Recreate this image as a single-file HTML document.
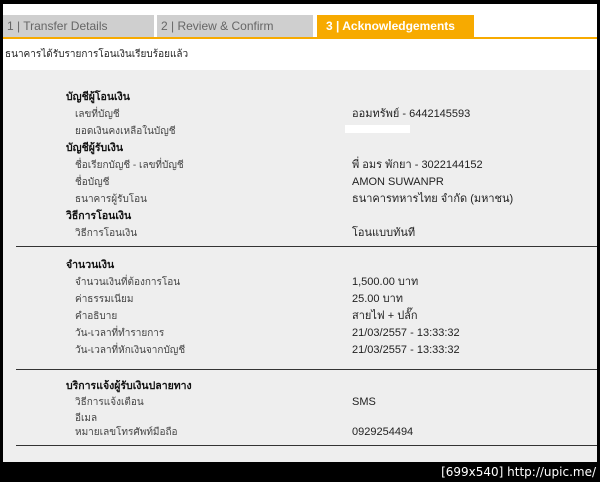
<!DOCTYPE html><html><head><meta charset="utf-8"><style>
*{margin:0;padding:0}
body{width:600px;height:482px;background:#000;position:relative;overflow:hidden;font-family:"Liberation Sans","Noto Sans CJK SC",sans-serif;font-size:11px;color:#222}
#w{position:absolute;left:3px;top:4px;width:594px;height:458px;background:#fff}
.tab{position:absolute;top:11px;height:22px;line-height:22px;font-size:12px;color:#666;background:#cfcfcf;padding-left:4px}
#p{position:absolute;left:0;top:66px;width:594px;height:392px;background:#eeeeee}
.a{position:absolute;white-space:nowrap;line-height:13px;height:13px}
.h{font-weight:bold;left:63px;color:#111;font-size:10.5px}
.l{left:72px;color:#444;font-size:10px}
.v{left:349px;color:#222}
.ln{position:absolute;left:13px;width:581px;height:1px;background:#333}
</style></head><body><div id="w">
<div class="tab" style="left:0;width:147px">1 | Transfer Details</div>
<div class="tab" style="left:154px;width:152px">2 | Review &amp; Confirm</div>
<div class="tab" style="left:314px;background:#f7aa00;color:#fff;font-weight:bold;padding-left:9px;width:148px">3 | Acknowledgements</div>
<div style="position:absolute;left:0;top:33px;width:594px;height:2px;background:#f7aa00"></div>
<div class="a" style="left:2px;top:44px;font-size:10px">ธนาคารได้รับรายการโอนเงินเรียบร้อยแล้ว</div>
<div id="p"></div>
<div class="a h" style="top:87px">บัญชีผู้โอนเงิน</div>
<div class="a l" style="top:104px">เลขที่บัญชี</div><div class="a v" style="top:104px">ออมทรัพย์ - 6442145593</div>
<div class="a l" style="top:121px">ยอดเงินคงเหลือในบัญชี</div><div class="a" style="left:342px;top:121px;width:65px;height:8px;background:#fff"></div>
<div class="a h" style="top:138px">บัญชีผู้รับเงิน</div>
<div class="a l" style="top:155px">ชื่อเรียกบัญชี - เลขที่บัญชี</div><div class="a v" style="top:155px">พี่ อมร พักยา - 3022144152</div>
<div class="a l" style="top:172px">ชื่อบัญชี</div><div class="a v" style="top:172px">AMON SUWANPR</div>
<div class="a l" style="top:189px">ธนาคารผู้รับโอน</div><div class="a v" style="top:189px">ธนาคารทหารไทย จำกัด (มหาชน)</div>
<div class="a h" style="top:206px">วิธีการโอนเงิน</div>
<div class="a l" style="top:223px">วิธีการโอนเงิน</div><div class="a v" style="top:223px">โอนแบบทันที</div>
<div class="ln" style="top:242px"></div>
<div class="a h" style="top:255px">จำนวนเงิน</div>
<div class="a l" style="top:272px">จำนวนเงินที่ต้องการโอน</div><div class="a v" style="top:272px">1,500.00 บาท</div>
<div class="a l" style="top:289px">ค่าธรรมเนียม</div><div class="a v" style="top:289px">25.00 บาท</div>
<div class="a l" style="top:306px">คำอธิบาย</div><div class="a v" style="top:306px">สายไฟ + ปลั๊ก</div>
<div class="a l" style="top:323px">วัน-เวลาที่ทำรายการ</div><div class="a v" style="top:323px">21/03/2557 - 13:33:32</div>
<div class="a l" style="top:340px">วัน-เวลาที่หักเงินจากบัญชี</div><div class="a v" style="top:340px">21/03/2557 - 13:33:32</div>
<div class="ln" style="top:365px"></div>
<div class="a h" style="top:376px">บริการแจ้งผู้รับเงินปลายทาง</div>
<div class="a l" style="top:392px">วิธีการแจ้งเตือน</div><div class="a v" style="top:392px">SMS</div>
<div class="a l" style="top:408px">อีเมล</div>
<div class="a l" style="top:422px">หมายเลขโทรศัพท์มือถือ</div><div class="a v" style="top:422px">0929254494</div>
<div class="ln" style="top:441px"></div>
</div>
<div class="a" style="right:4px;top:466px;color:#fff;font-size:12px;font-family:'DejaVu Sans',sans-serif">[699x540] http://upic.me/</div>
</body></html>
